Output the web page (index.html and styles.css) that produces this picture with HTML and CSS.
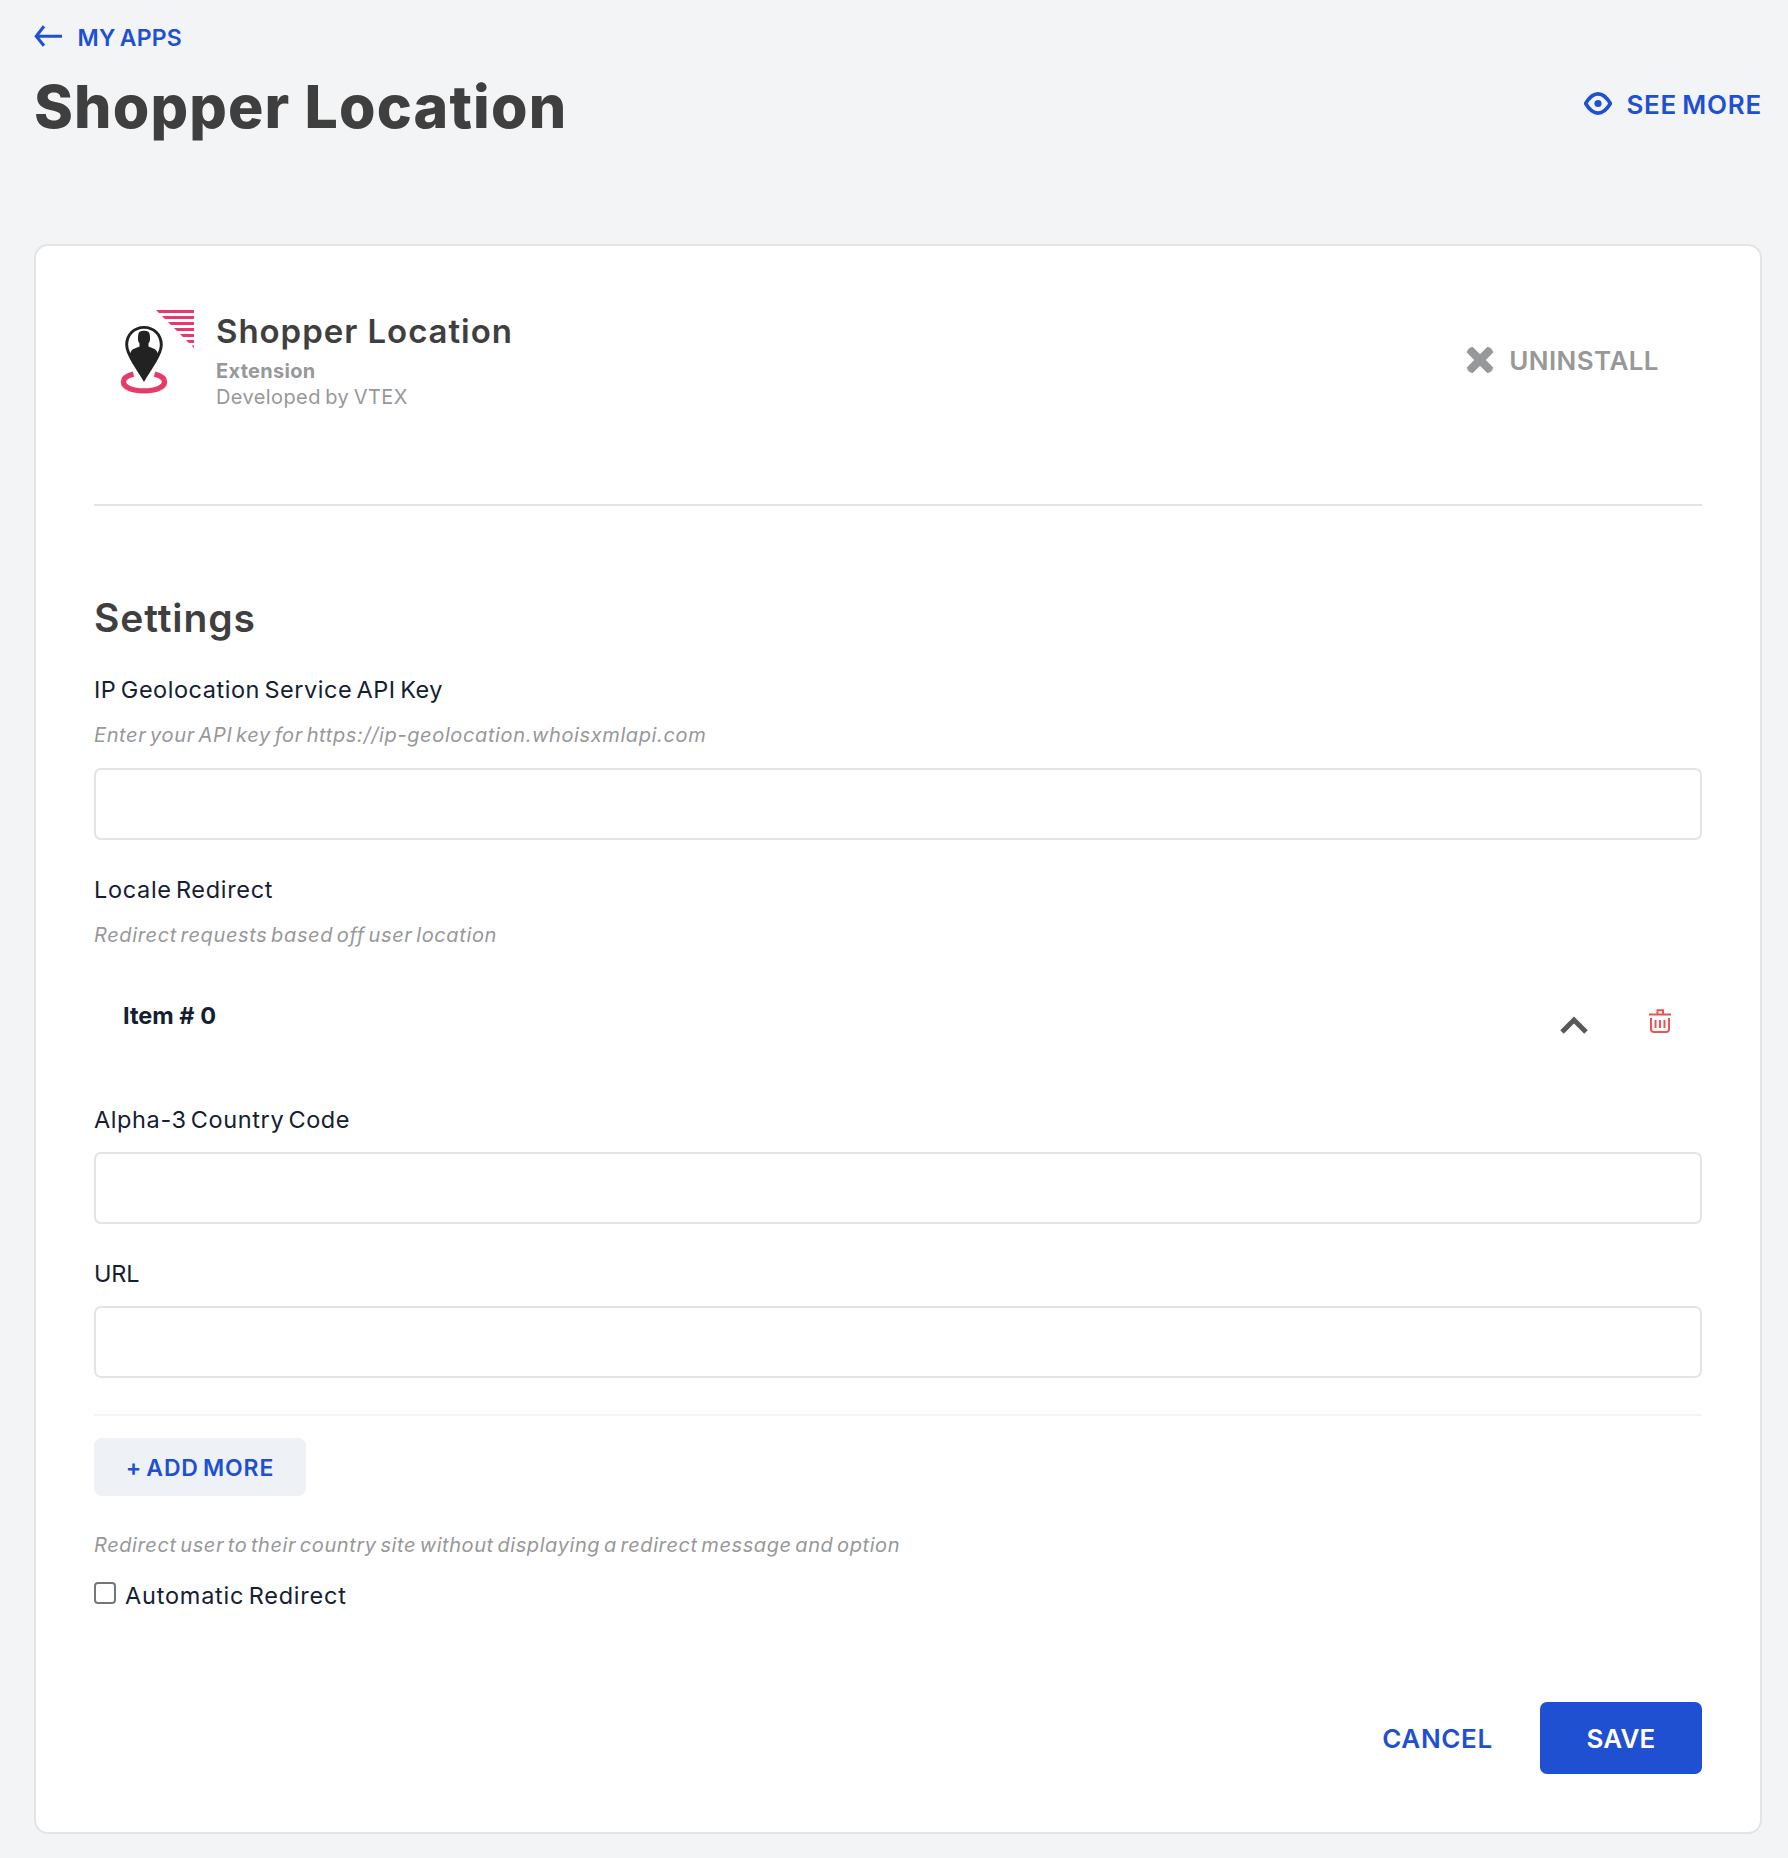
FILE: index.html
```html
<!DOCTYPE html>
<html lang="en">
<head>
<meta charset="utf-8">
<title>Shopper Location</title>
<link rel="stylesheet" href="styles.css">
</head>
<body>
<div class="page">
  <a class="back">
    <svg class="back-icon" width="28" height="22" viewBox="0 0 28 22" fill="none" stroke="currentColor" stroke-width="3"><path d="M28 11.2H3M10 1.3L2.2 11.2L10 20.8"/></svg>
    <span>MY APPS</span>
  </a>
  <header class="page-head">
    <h1 class="page-title">Shopper Location</h1>
    <a class="see-more">
      <svg class="see-icon" width="28" height="23" viewBox="0 0 28 23"><path d="M1.6 11.5C5.5 5 9.500 1.900 14 1.900S22.500 5 26.400 11.500C22.500 18 18.500 21.100 14 21.100S5.500 18 1.600 11.500Z" fill="none" stroke="currentColor" stroke-width="3.600" stroke-linejoin="round"/><circle cx="14" cy="11.500" r="3.600" fill="currentColor"/></svg>
      <span>SEE MORE</span>
    </a>
  </header>

  <main class="card">
    <section class="app">
      <svg class="app-logo" width="78" height="88" viewBox="0 0 78 88">
        <g fill="#e8396b">
          <path d="M38 2H76V5H41ZM44 8H76V11H47ZM50 14H76V17H53ZM56 20H76V23H59ZM62 26H76V29H65ZM68 32H76V35H71ZM73.500 37.500H76V40Z"/>
        </g>
        <path d="M15.500 67C9.500 68.500 5.500 71 5.500 74.500C5.500 80 14 83.700 26 83.700S46.500 80 46.500 74.500C46.500 71 42.500 68.500 36.500 67" transform="translate(0 -.8)" fill="none" stroke="#e8396b" stroke-width="5.400"/>
        <path d="M26 18C15.500 18 7.200 26 7.200 36.500C7.200 47 18 60 26 74C34 60 44.800 47 44.800 36.500C44.800 26 36.500 18 26 18Z" fill="#222"/>
        <path d="M26 20.800C17 20.800 10.200 27.500 10.200 36.500C10.200 39.500 11 42.500 12.500 45.200C13 41 17 40.500 21.500 38.500V35.500C19.500 33 19.800 30 20.300 26.500C20.600 23.500 23 22.700 26 22.700S31.400 23.500 31.700 26.500C32.200 30 32.500 33 30.500 35.500V38.500C35 40.500 39 41 39.500 45.200C41 42.500 41.800 39.500 41.800 36.500C41.800 27.500 35 20.800 26 20.800Z" fill="#fff"/>
      </svg>
      <div class="app-info">
        <h2 class="app-name">Shopper Location</h2>
        <p class="app-type">Extension</p>
        <p class="app-vendor">Developed by VTEX</p>
      </div>
      <button class="uninstall">
        <svg width="28" height="28" viewBox="0 0 28 28" stroke="currentColor" stroke-width="8" stroke-linecap="butt"><path d="M3.500 3.500L24.500 24.500M24.500 3.500L3.500 24.500"/><path d="M5.500 5.500L22.500 22.500M22.500 5.500L5.500 22.500" stroke-linecap="round"/></svg>
        <span>UNINSTALL</span>
      </button>
    </section>

    <section class="settings">
      <h2 class="settings-title">Settings</h2>
      <label class="label label-key" for="key">IP Geolocation Service API Key</label>
      <p class="hint hint-key">Enter your API key for https://ip-geolocation.whoisxmlapi.com</p>
      <input class="input input-hinted" id="key" type="text">

      <p class="label label-next label-locale">Locale Redirect</p>
      <p class="hint hint-locale">Redirect requests based off user location</p>

      <div class="item">
        <span class="item-name">Item # 0</span>
        <svg class="item-toggle" width="28" height="20" viewBox="0 0 28 20" fill="none" stroke="#585959" stroke-width="5"><path d="M2 17L14 5L26 17"/></svg>
        <svg class="item-delete" width="22" height="24" viewBox="0 0 22 24" fill="none" stroke="#f0524f" stroke-width="2"><path d="M0 5.500H22M8.500 5.500V1.200H14V5.500M2 9V20Q2 23 5 23H17Q20 23 20 20V9M6.500 11V19M11 11V19M15.500 11V19"/></svg>
      </div>

      <label class="label label-country" for="country">Alpha-3 Country Code</label>
      <input class="input" id="country" type="text">
      <label class="label label-next label-url" for="url">URL</label>
      <input class="input" id="url" type="text">

      <div class="add-row"><button class="add">+ ADD MORE</button></div>

      <p class="hint hint-auto">Redirect user to their country site without displaying a redirect message and option</p>
      <label class="check"><input class="check-box" type="checkbox"><span class="check-text">Automatic Redirect</span></label>
    </section>

    <footer class="actions">
      <button class="cancel">CANCEL</button>
      <button class="save">SAVE</button>
    </footer>
  </main>
</div>
</body>
</html>
```
FILE: styles.css
```css
* { box-sizing: border-box; }
body {
  margin: 0;
  background: #f2f4f5;
  color: #142032;
  font-family: Inter, "Liberation Sans", sans-serif;
}
h1, h2, p { margin: 0; }
svg { display: block; flex: none; }
button { border: 0; background: none; padding: 0; font: inherit; white-space: nowrap; }

.page { min-height: 1858px; padding: 20px 26px 24px 34px; }

.back {
  display: flex;
  align-items: center;
  height: 36px;
  gap: 15.500px;
  color: #1f50d1;
  font-size: 23px;
  font-weight: 600;
  letter-spacing: .25px;
  word-spacing: -2px;
}
.back-icon { margin-bottom: 4px; }

.page-head {
  display: flex;
  align-items: center;
  justify-content: space-between;
  height: 102px;
  margin-bottom: 86px;
}
.page-title { font-size: 59px; line-height: 70px; font-weight: 800; letter-spacing: 1.150px; color: #3f3f40; white-space: nowrap; }
.see-more {
  display: flex;
  align-items: center;
  gap: 14px;
  padding-bottom: 6px;
  color: #1f50d1;
  font-size: 26px;
  font-weight: 600;
  letter-spacing: .75px;
  word-spacing: -2px;
}
.see-icon { margin-bottom: 2px; }

.card {
  height: 1590px;
  padding: 58px;
  border: 2px solid #e3e4e6;
  border-radius: 14px;
  background: #fff;
}

.app {
  display: flex;
  height: 202px;
  padding: 4px 43px 0 24px;
  border-bottom: 2px solid #e3e4e6;
}
.app-info { margin: 4px auto 0 20px; color: #979899; }
.app-name { font-size: 33px; line-height: 38px; font-weight: 600; letter-spacing: .950px; color: #3f3f40; }
.app-type { margin-top: 8px; font-size: 20px; line-height: 26px; font-weight: 700; letter-spacing: .3px; }
.app-vendor { font-size: 20px; line-height: 26px; letter-spacing: .4px; word-spacing: -1.500px; }
.uninstall {
  display: flex;
  align-items: center;
  gap: 15px;
  height: 104px;
  color: #979899;
  font-size: 26px;
  font-weight: 600;
  letter-spacing: .42px;
}

.settings { display: flex; flex-direction: column; align-items: stretch; }
.settings-title { margin: 88px 0 33px; font-size: 39px; line-height: 48px; font-weight: 600; letter-spacing: .9px; color: #3f3f40; }
.label { font-size: 23.500px; line-height: 30px; letter-spacing: .6px; word-spacing: -3px; }
.label-key { letter-spacing: .53px; word-spacing: -2.700px; }
.label-locale { letter-spacing: .67px; }
.label-url { letter-spacing: -.2px; }
.hint {
  margin: 17px 0 0;
  font-size: 20px;
  line-height: 26px;
  font-style: italic;
  letter-spacing: .62px;
  word-spacing: -2.500px;
  color: #979899;
}
.input {
  height: 72px;
  margin-top: 17px;
  padding: 0 20px;
  border: 2px solid #e3e4e6;
  border-radius: 7px;
  background: #fff;
  font: inherit;
  font-size: 23px;
}
.input-hinted { margin-top: 20px; }
.label-next { margin-top: 35px; }

.item {
  display: flex;
  align-items: center;
  height: 60px;
  margin: 37px 0 60px;
  padding: 0 31px 0 29px;
}
.item-name { margin-right: auto; font-size: 23.500px; font-weight: 700; }
.item-toggle { margin: 19px 61px 0 0; }
.item-delete { margin-top: 11px; }

.add-row { margin-top: 36px; padding-top: 22px; border-top: 2px solid #f2f4f5; }
.add {
  width: 212px;
  height: 58px;
  padding-top: 2px;
  border-radius: 8px;
  background: #eef2f7;
  color: #1f50d1;
  font-size: 23px;
  font-weight: 600;
  letter-spacing: .85px;
  word-spacing: -2.500px;
}
.hint-auto { margin-top: 36px; letter-spacing: .58px; }
.check { display: flex; align-items: flex-start; margin-top: 23px; }
.check-box {
  appearance: none;
  width: 22px;
  height: 22px;
  margin: 1px 9px 0 0;
  border: 2px solid #767676;
  border-radius: 4px;
  background: #fff;
}
.check-text { font-size: 23.500px; line-height: 30px; letter-spacing: .78px; word-spacing: -3px; }

.actions { display: flex; justify-content: flex-end; margin-top: 91px; font-size: 26px; font-weight: 600; }
.cancel { width: 206px; height: 72px; padding-left: 1px; color: #1f50d1; letter-spacing: .65px; }
.save { width: 162px; height: 72px; border-radius: 7px; background: #1f50d1; color: #fff; letter-spacing: .2px; }
```
